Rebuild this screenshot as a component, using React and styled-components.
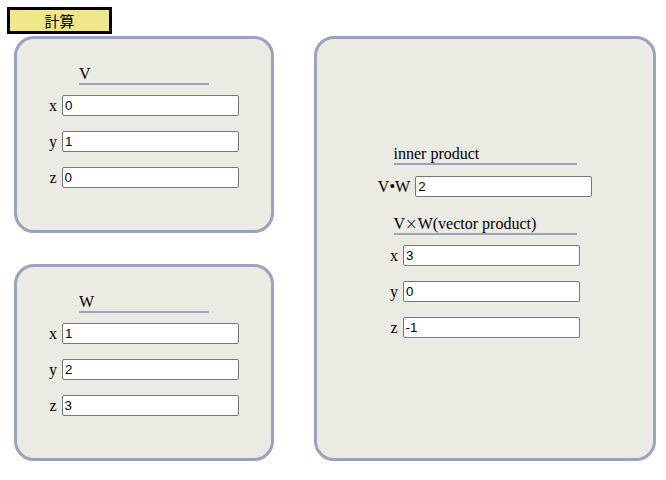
import React from "react";
import styled, { createGlobalStyle } from "styled-components";

const GlobalStyle = createGlobalStyle`
  html, body { margin: 0; padding: 0; background: #ffffff; }
  body { font-family: "Liberation Serif", "Times New Roman", serif; font-size: 16px; color: #000; }
  * { box-sizing: border-box; }
`;

const Page = styled.div`
  padding: 7px;
  width: 666px;
`;

const CalcButton = styled.button`
  display: block;
  width: 105px;
  height: 27px;
  margin: 0;
  padding: 0;
  border: 3px solid #000;
  background: #f0e68c;
  font-family: "Noto Sans CJK JP", "Noto Sans CJK SC", sans-serif;
  font-size: 15px;
  line-height: 19px;
  color: #000;
  text-align: center;
  cursor: pointer;
`;

const Board = styled.div`
  margin: 2px 0 0 7px;
  display: grid;
  grid-template-columns: 260px 342px;
  grid-template-rows: 197px 197px;
  column-gap: 40px;
  row-gap: 31px;
`;

const Panel = styled.section`
  grid-column: ${(p) => p.$col || "auto"};
  grid-row: ${(p) => p.$row || "auto"};
  border: 3px solid #9aa2be;
  border-radius: 20px;
  background: #ebeae3;
  display: flex;
  flex-direction: column;
  align-items: center;
  padding-top: ${(p) => p.$top}px;
`;

const Heading = styled.div`
  width: ${(p) => p.$w}px;
  height: 20px;
  line-height: 18px;
  font-size: 16px;
  text-align: left;
  border-bottom: 2px solid #9aa2be;
  margin-bottom: ${(p) => p.$mb ?? 10}px;
  margin-top: ${(p) => p.$mt ?? 0}px;
  white-space: nowrap;
`;

const Times = styled.span`
  font-family: "DejaVu Sans", sans-serif;
  font-size: 15px;
  font-weight: 300;
`;

const Row = styled.div`
  display: flex;
  align-items: center;
  height: 21px;
  gap: 5px;
  margin-bottom: ${(p) => p.$mb ?? 15}px;
`;

const Label = styled.span`
  font-size: 16px;
  line-height: 18px;
`;

const Field = styled.input`
  width: 177px;
  height: 21px;
  margin: 0;
  padding: 1px 2px;
  border: 1px solid #767676;
  border-radius: 2px;
  background: #fff;
  font-family: "Liberation Sans", Arial, sans-serif;
  font-size: 13.333px;
  color: #000;
  outline: none;
`;

function VectorRows({ values }) {
  return (
    <>
      {["x", "y", "z"].map((k, i) => (
        <Row key={k} $mb={i === 2 ? 0 : 15}>
          <Label>{k}</Label>
          <Field readOnly value={values[i]} />
        </Row>
      ))}
    </>
  );
}

export default function App() {
  return (
    <Page>
      <GlobalStyle />
      <CalcButton type="button">計算</CalcButton>
      <Board>
        <Panel $col="1" $row="1" $top={26}>
          <Heading $w={130}>V</Heading>
          <VectorRows values={["0", "1", "0"]} />
        </Panel>
        <Panel $col="1" $row="2" $top={26}>
          <Heading $w={130}>W</Heading>
          <VectorRows values={["1", "2", "3"]} />
        </Panel>
        <Panel $col="2" $row="1 / span 2" $top={106}>
          <Heading $w={183} $mb={11}>inner product</Heading>
          <Row $mb={0}>
            <Label>V•W</Label>
            <Field readOnly value="2" />
          </Row>
          <Heading $w={183} $mt={18}>
            V<Times>×</Times>W(vector product)
          </Heading>
          <VectorRows values={["3", "0", "-1"]} />
        </Panel>
      </Board>
    </Page>
  );
}
